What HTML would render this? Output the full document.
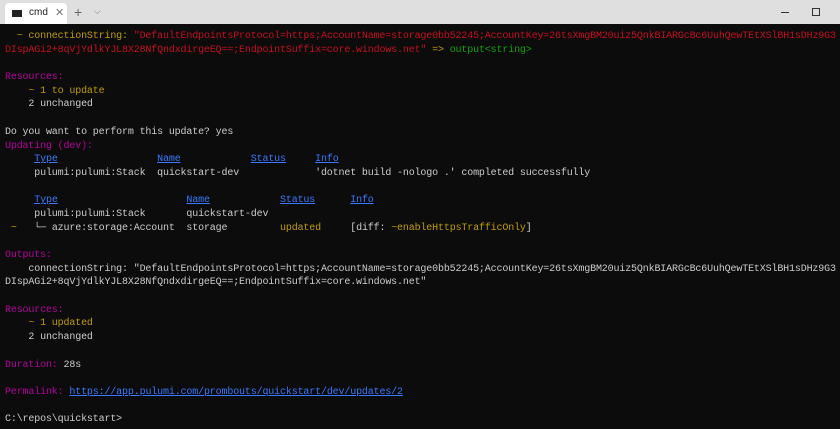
<!DOCTYPE html>
<html><head><meta charset="utf-8"><style>
html,body{margin:0;padding:0;width:840px;height:429px;overflow:hidden;background:#0c0c0c}
#bar{position:absolute;left:0;top:0;width:840px;height:24px;background:#dfdfdf}
#tab{position:absolute;left:5px;top:3px;width:62px;height:21px;background:#fff;border-radius:4px 4px 0 0}
#term{position:absolute;left:5px;top:30px;margin:0;font-family:"Liberation Mono",monospace;font-size:10px;letter-spacing:-0.15px;line-height:13.68px;color:#cccccc;white-space:pre}
.y{color:#c19c00}.r{color:#c50f1f}.m{color:#b4009e}.g{color:#13a10e}
.b{color:#3b78ff;text-decoration:underline}
</style></head><body>
<div id="bar">
<div id="tab">
<div style="position:absolute;left:7px;top:7px;width:10px;height:7px;background:#222"></div>
<div style="position:absolute;left:24px;top:4px;font:10px 'Liberation Sans',sans-serif;color:#222">cmd</div>
<div style="position:absolute;left:50px;top:3px;font:11px 'Liberation Sans',sans-serif;color:#777">✕</div>
</div>
<div style="position:absolute;left:74px;top:4px;font:14px 'Liberation Sans',sans-serif;color:#666">+</div>
<div style="position:absolute;left:94px;top:6px;font:9px 'Liberation Sans',sans-serif;color:#777">⌵</div>
<div style="position:absolute;left:781px;top:12px;width:8px;height:1px;background:#333"></div>
<div style="position:absolute;left:812px;top:8px;width:6px;height:6px;border:1px solid #333"></div>
</div>
<pre id="term">  <span class="y">~ connectionString: </span><span class="r">"DefaultEndpointsProtocol=https;AccountName=storage0bb52245;AccountKey=26tsXmgBM20uiz5QnkBIARGcBc6UuhQewTEtXSlBH1sDHz9G3</span>
<span class="r">DIspAGi2+8qVjYdlkYJL8X28NfQndxdirgeEQ==;EndpointSuffix=core.windows.net"</span> <span class="y">=&gt;</span> <span class="g">output&lt;string&gt;</span>

<span class="m">Resources:</span>
    <span class="y">~ 1 to update</span>
    2 unchanged

Do you want to perform this update? yes
<span class="m">Updating (dev):</span>
     <span class="b">Type</span>                 <span class="b">Name</span>            <span class="b">Status</span>     <span class="b">Info</span>
     pulumi:pulumi:Stack  quickstart-dev             'dotnet build -nologo .' completed successfully

     <span class="b">Type</span>                      <span class="b">Name</span>            <span class="b">Status</span>      <span class="b">Info</span>
     pulumi:pulumi:Stack       quickstart-dev
 <span class="y">~</span>   └─ azure:storage:Account  storage         <span class="y">updated</span>     [diff: <span class="y">~enableHttpsTrafficOnly</span>]

<span class="m">Outputs:</span>
    connectionString: "DefaultEndpointsProtocol=https;AccountName=storage0bb52245;AccountKey=26tsXmgBM20uiz5QnkBIARGcBc6UuhQewTEtXSlBH1sDHz9G3
DIspAGi2+8qVjYdlkYJL8X28NfQndxdirgeEQ==;EndpointSuffix=core.windows.net"

<span class="m">Resources:</span>
    <span class="y">~ 1 updated</span>
    2 unchanged

<span class="m">Duration:</span> 28s

<span class="m">Permalink:</span> <span class="b">https://app.pulumi.com/prombouts/quickstart/dev/updates/2</span>

C:\repos\quickstart&gt;</pre>
</body></html>
